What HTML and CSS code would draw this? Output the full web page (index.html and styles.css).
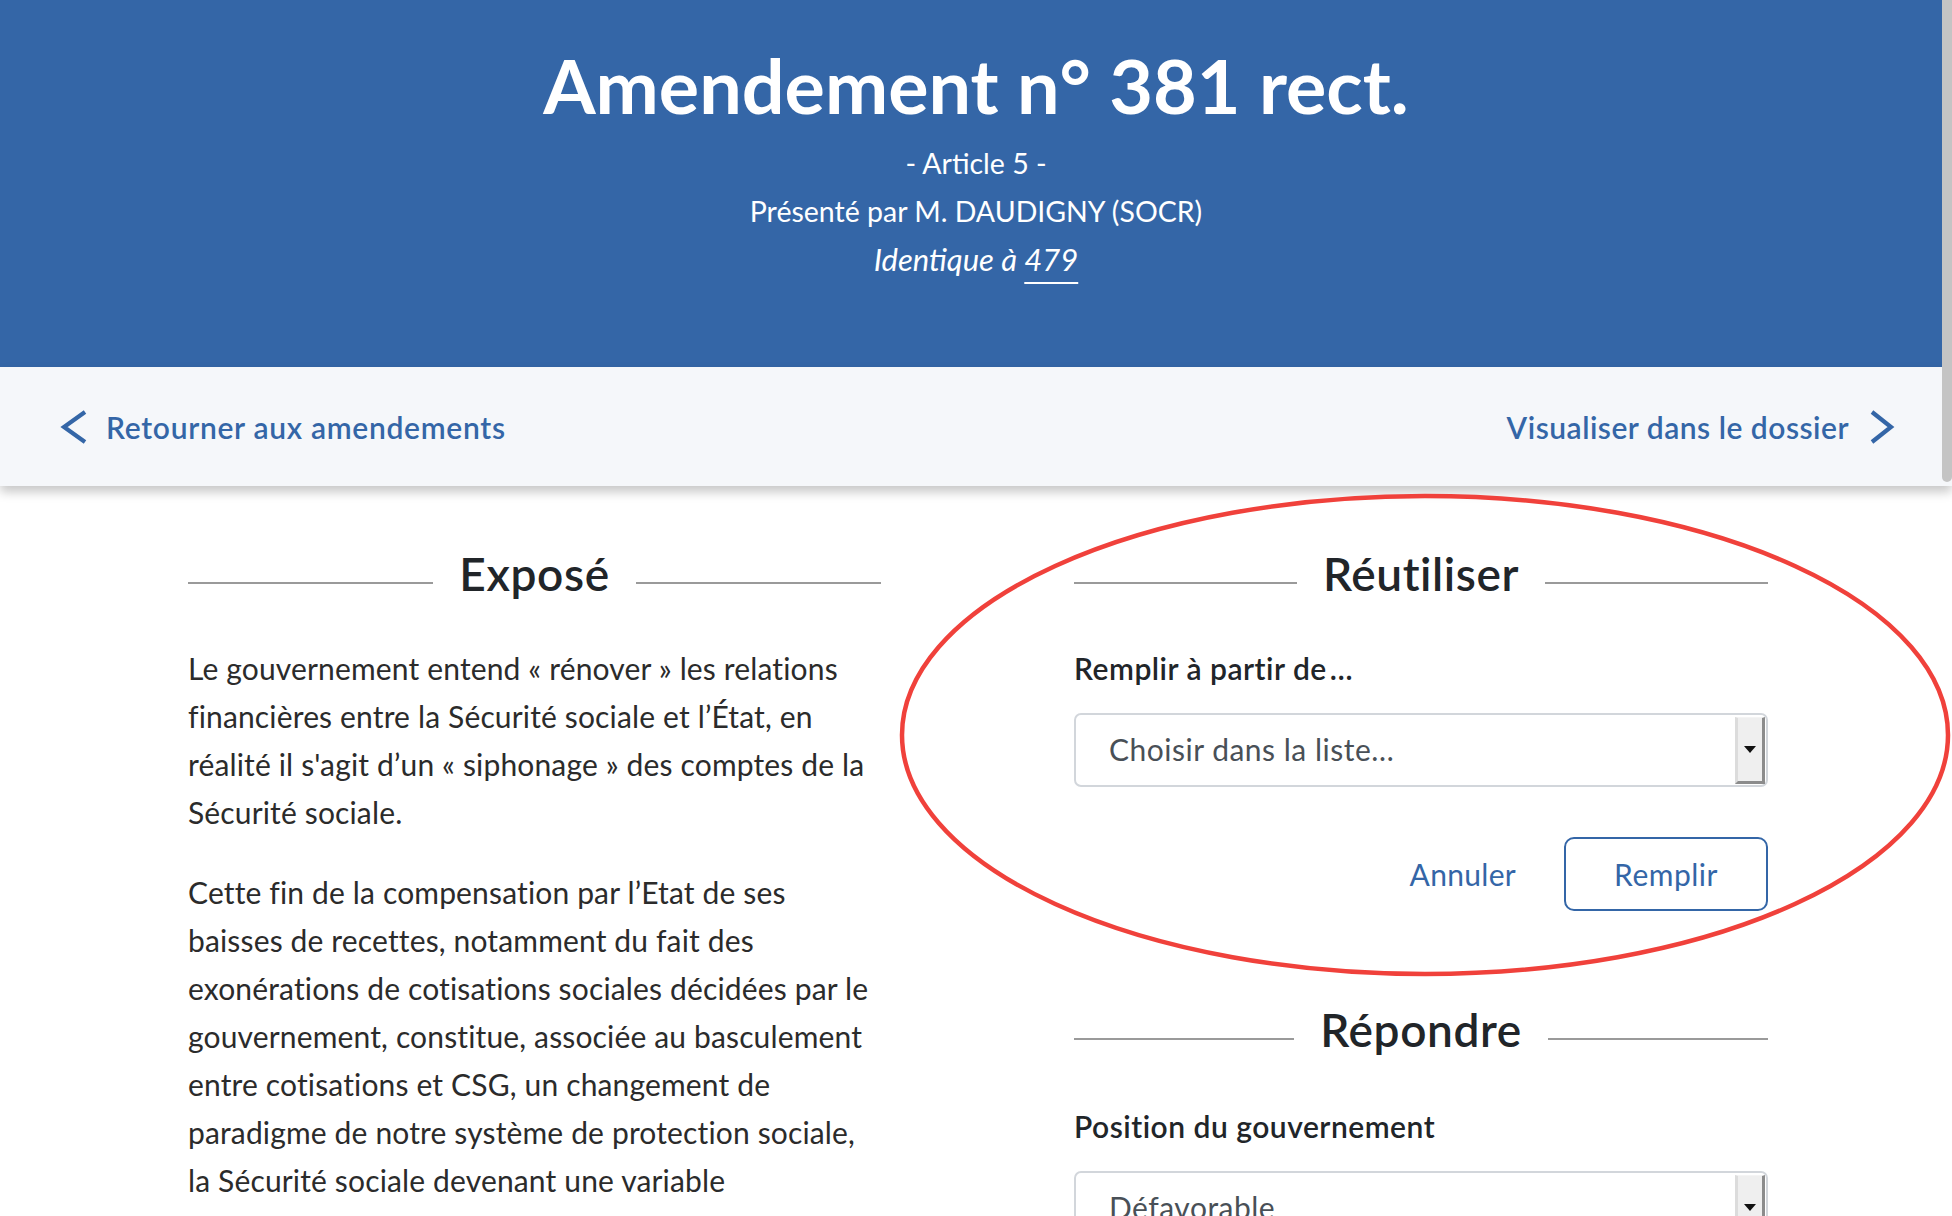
FILE: index.html
```html
<!DOCTYPE html>
<html lang="fr">
<head>
<meta charset="utf-8">
<title>Amendement n° 381 rect.</title>
<link rel="stylesheet" href="styles.css">
</head>
<body>
<div class="page">
  <header class="hero">
    <h1 class="hero-title">Amendement n° 381 rect.</h1>
    <p class="hero-line">- Article 5 -</p>
    <p class="hero-line">Présenté par M. DAUDIGNY (SOCR)</p>
    <p class="hero-line hero-italic">Identique à <a class="hero-link" href="#">479</a></p>
  </header>

  <nav class="bar">
    <a class="bar-link" href="#">
      <svg class="chev" width="28" height="34" viewBox="0 0 28 34"><polyline points="25,2 4,17 25,32" fill="none" stroke="#3466a7" stroke-width="4.2"/></svg>
      <span>Retourner aux amendements</span>
    </a>
    <a class="bar-link" href="#">
      <span>Visualiser dans le dossier</span>
      <svg class="chev" width="26" height="34" viewBox="0 0 26 34"><polyline points="3,2 22,17 3,32" fill="none" stroke="#3466a7" stroke-width="4.2"/></svg>
    </a>
  </nav>

  <main class="content">
    <section class="col">
      <h2 class="section-title">Exposé</h2>
      <p class="para">Le gouvernement entend « rénover » les relations financières entre la Sécurité sociale et l’État, en réalité il s'agit d’un « siphonage » des comptes de la Sécurité sociale.</p>
      <p class="para">Cette fin de la compensation par l’Etat de ses baisses de recettes, notamment du fait des exonérations de cotisations sociales décidées par le gouvernement, constitue, associée au basculement entre cotisations et CSG, un changement de paradigme de notre système de protection sociale, la Sécurité sociale devenant une variable</p>
    </section>

    <section class="col">
      <h2 class="section-title">Réutiliser</h2>
      <div class="field-label">Remplir à partir de<span class="ellipsis">…</span></div>
      <div class="select">
        <span class="select-text">Choisir dans la liste…</span>
        <span class="select-btn"><span class="tri"></span></span>
      </div>
      <div class="actions">
        <a class="link-btn" href="#">Annuler</a>
        <button class="btn-outline" type="button">Remplir</button>
      </div>

      <h2 class="section-title section-title-next">Répondre</h2>
      <div class="field-label">Position du gouvernement</div>
      <div class="select">
        <span class="select-text">Défavorable</span>
        <span class="select-btn"><span class="tri"></span></span>
      </div>
    </section>
  </main>

  <svg class="annot" width="1052" height="484" viewBox="0 0 1052 484"><ellipse cx="526" cy="242" rx="523" ry="239" fill="none" stroke="#f0413b" stroke-width="4.5"/></svg>
  <div class="thumb"></div>
</div>
</body>
</html>
```

FILE: styles.css
```css
* { box-sizing: border-box; }
html, body { margin: 0; padding: 0; }
body {
  font-family: Lato, "Open Sans", sans-serif;
  color: #212529;
  background: #ffffff;
  height: 100vh;
  overflow: hidden;
}
.page { position: relative; min-height: 100vh; }

.hero {
  background: #3466a7;
  height: 367px;
  padding-top: 40px;
  text-align: center;
  color: #ffffff;
}
.hero-title {
  margin: 0 0 9px;
  font-size: 75.5px;
  line-height: 90px;
  font-weight: 700;
}
.hero-line {
  margin: 0;
  font-size: 28.5px;
  line-height: 48px;
  font-weight: 400;
}
.hero-italic { font-size: 31px; font-style: italic; }
.hero-link {
  color: #ffffff;
  text-decoration: underline;
  text-decoration-thickness: 2px;
  text-underline-offset: 11px;
}

.bar {
  height: 119px;
  background: #f5f7fa;
  display: flex;
  align-items: center;
  justify-content: space-between;
  padding: 0 57px 0 60px;
  box-shadow: 0 6px 10px rgba(0, 0, 0, 0.22);
  position: relative;
  z-index: 1;
}
.bar-link {
  display: flex;
  align-items: center;
  gap: 18px;
  color: #3466a7;
  text-decoration: none;
  font-size: 30px;
  letter-spacing: 0.7px;
  font-weight: 600;
}
.bar-link:last-child { letter-spacing: 0.5px; gap: 20px; }
.chev { display: block; }

.content {
  display: grid;
  grid-template-columns: 693px 694px;
  column-gap: 193px;
  justify-content: center;
  padding: 60px 0 0 4px;
}

.section-title {
  display: flex;
  align-items: center;
  gap: 26px;
  margin: 0 0 42px;
  font-size: 46px;
  letter-spacing: 0.6px;
  line-height: 56px;
  font-weight: 600;
  color: #212529;
}
.section-title::before,
.section-title::after {
  content: "";
  flex: 1;
  height: 2px;
  background: #9a9a9a;
  margin-top: 18px;
}
.section-title-next { margin-top: 91px; margin-bottom: 44px; }

.para {
  margin: 0 0 32px;
  font-size: 30px;
  letter-spacing: 0.15px;
  line-height: 48px;
  color: #2b2b2b;
}

.field-label {
  font-size: 30px;
  letter-spacing: 0.5px;
  line-height: 48px;
  font-weight: 600;
  color: #212529;
  margin-bottom: 21px;
}
.ellipsis { letter-spacing: 4px; margin-left: 3px; }

.select {
  height: 74px;
  border: 2px solid #d2d6db;
  border-radius: 7px;
  display: flex;
  align-items: stretch;
  background: #ffffff;
  padding: 2px 1px 1px 0;
}
.select-text {
  flex: 1;
  display: flex;
  align-items: center;
  padding: 0 0 4px 33px;
  font-size: 30px;
  letter-spacing: 0.5px;
  color: #495057;
}
.select-btn {
  width: 30px;
  background: #efefef;
  border-left: 3px solid #dcdcdc;
  border-right: 3px solid #8c8c8c;
  border-bottom: 3px solid #8c8c8c;
  border-top: 1px solid #f4f4f4;
  display: flex;
  align-items: center;
  justify-content: center;
}
.tri {
  width: 0;
  height: 0;
  border-left: 6px solid transparent;
  border-right: 6px solid transparent;
  border-top: 7px solid #111111;
}

.actions {
  display: flex;
  justify-content: flex-end;
  align-items: center;
  gap: 48px;
  margin-top: 50px;
}
.link-btn {
  color: #3466a7;
  text-decoration: none;
  font-size: 30px;
  letter-spacing: 0.3px;
}
.btn-outline {
  width: 204px;
  height: 74px;
  border: 2px solid #3466a7;
  border-radius: 10px;
  background: #ffffff;
  color: #3466a7;
  font-family: inherit;
  font-size: 30px;
  letter-spacing: 0.5px;
  padding: 0;
}

.annot {
  position: absolute;
  left: 899px;
  top: 493px;
  pointer-events: none;
  z-index: 2;
}
.thumb {
  position: absolute;
  top: 0;
  right: 0;
  width: 10px;
  height: 482px;
  background: #c4c4c4;
  border-radius: 0 0 5px 5px;
  z-index: 3;
}
```
